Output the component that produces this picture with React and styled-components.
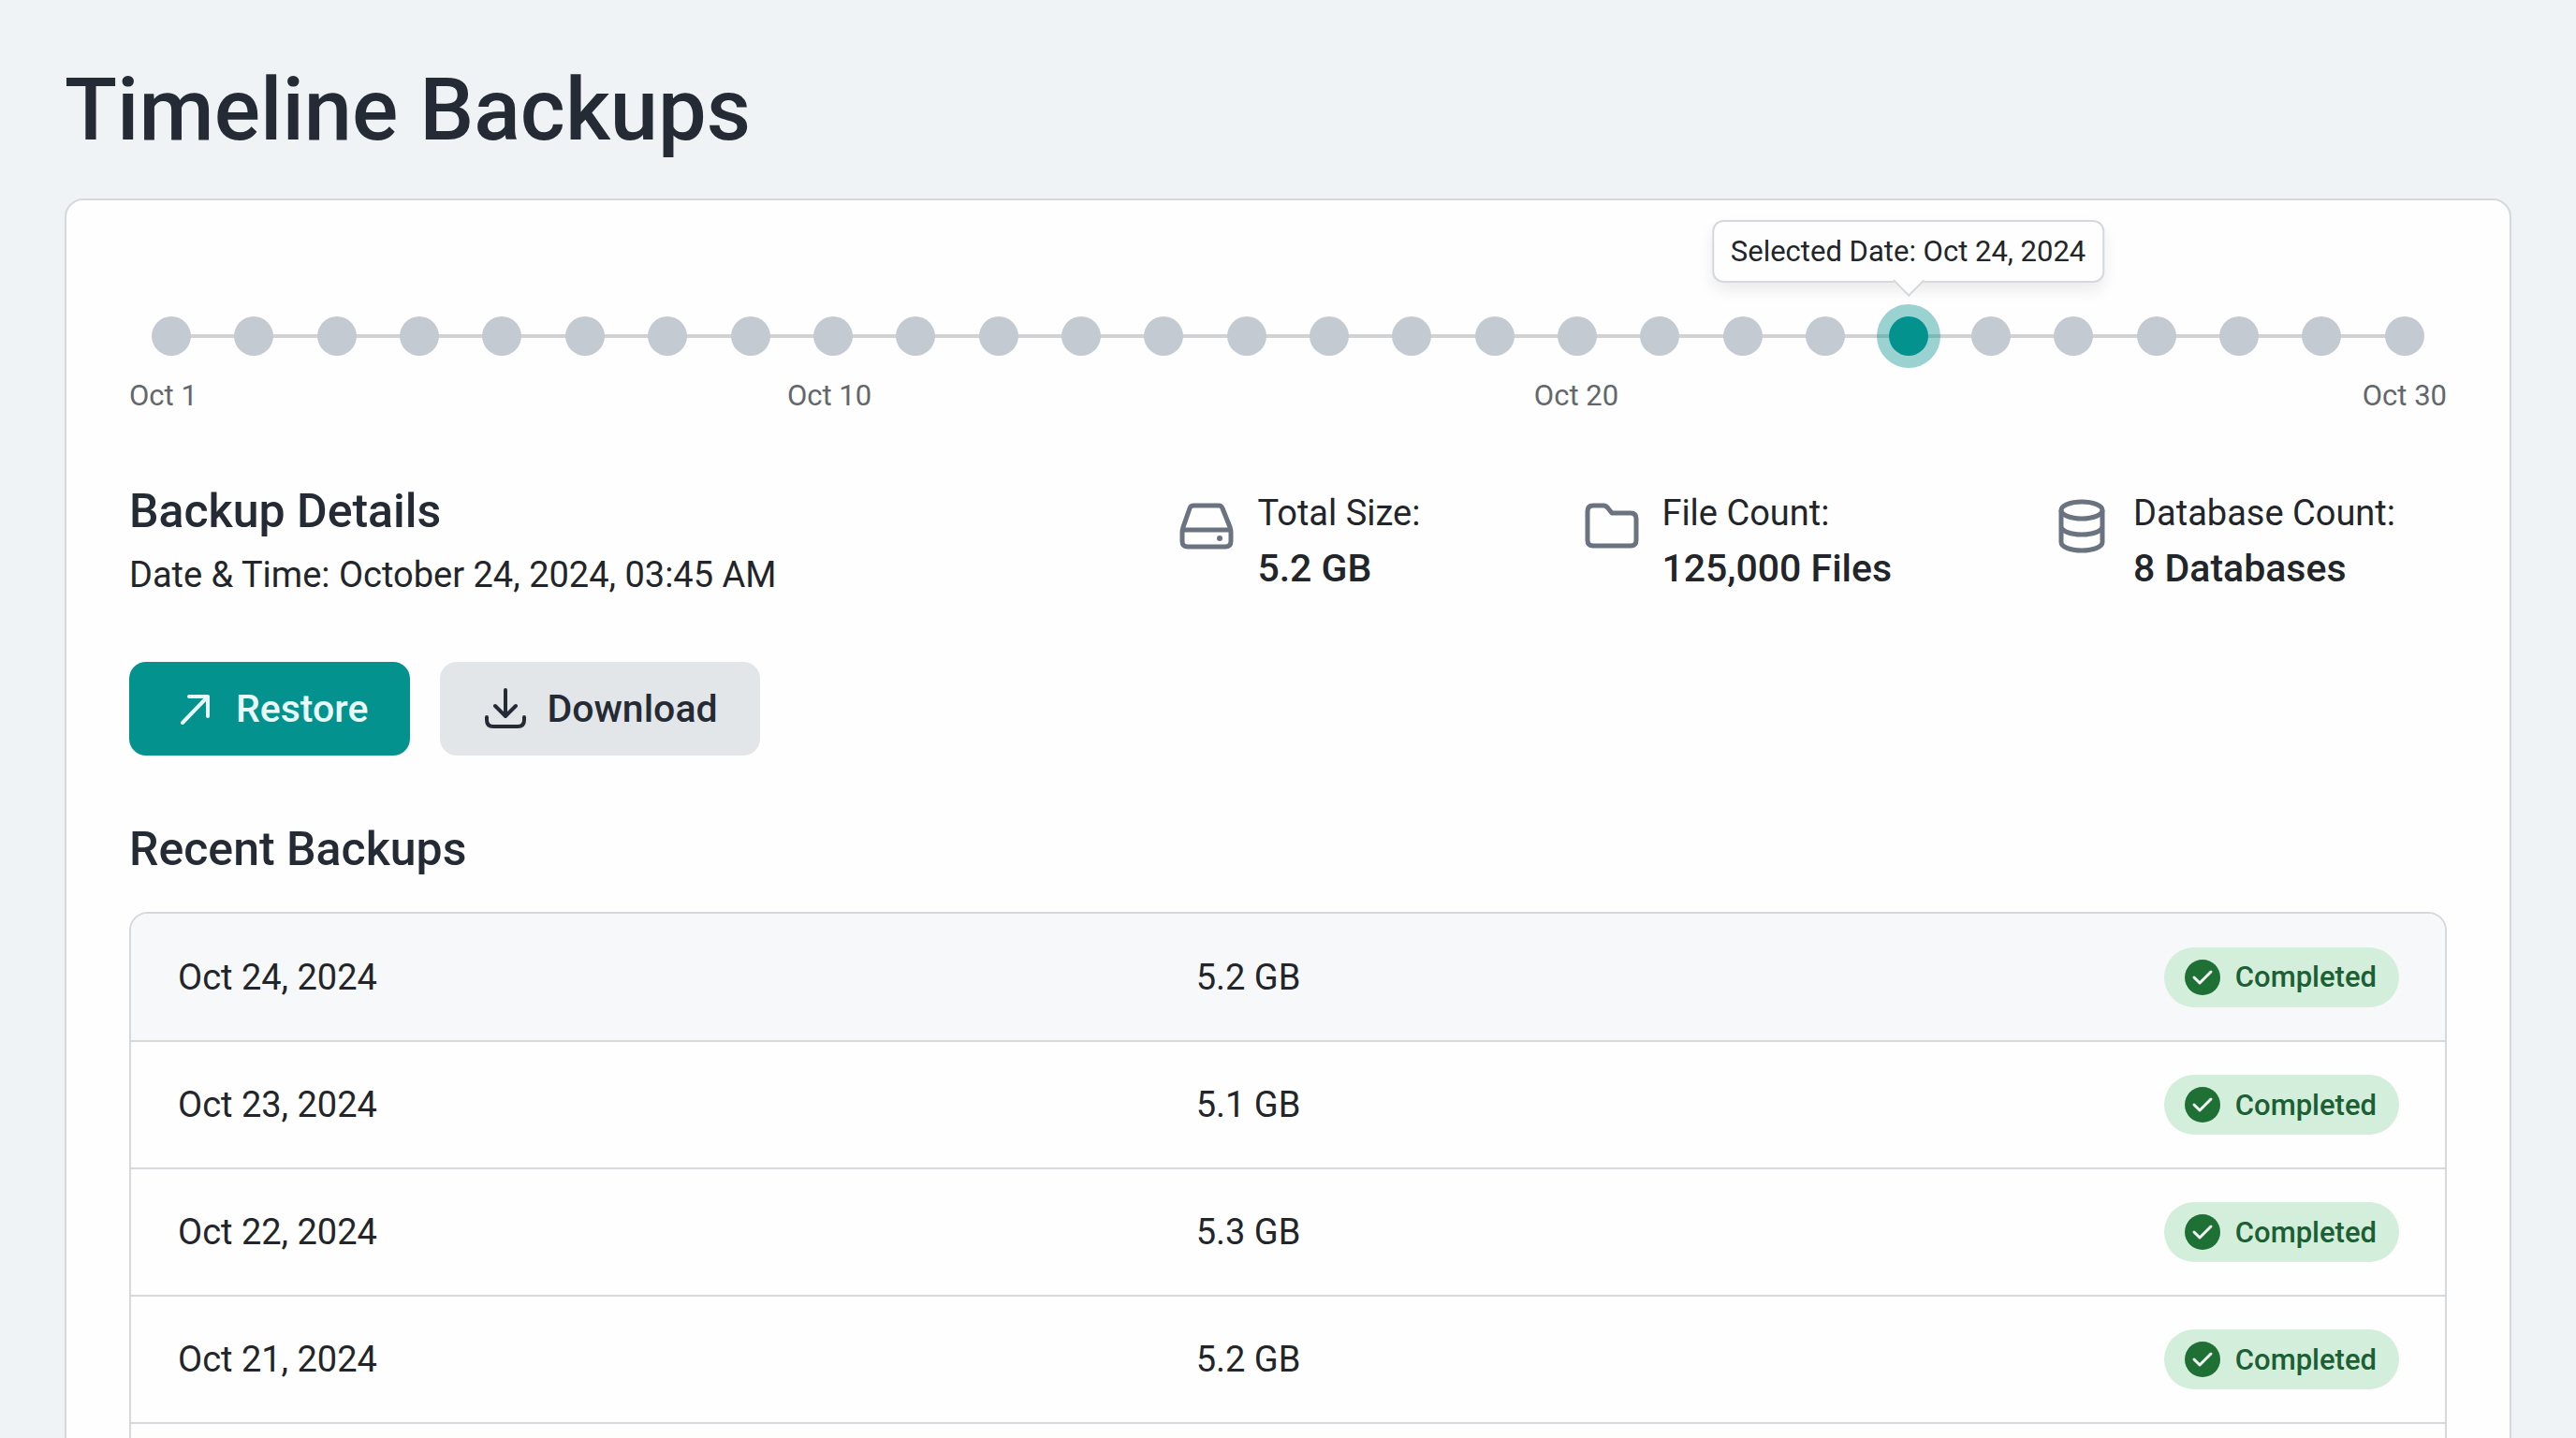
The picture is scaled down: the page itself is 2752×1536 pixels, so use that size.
import React, { useState } from "react";
import styled, { createGlobalStyle, ThemeProvider } from "styled-components";

const theme = {
  color: {
    page: "#eff3f6",
    white: "#fefefe",
    heading: "#252b35",
    text: "#222529",
    muted: "#63676c",
    border: "#d5d9dd",
    dot: "#c4cad2",
    primary: "#03928d",
    ring: "rgba(3, 146, 141, 0.4)",
    secondary: "#e3e6e9",
    icon: "#6b7280",
    success: "#1f7034",
    successText: "#1c5f34",
    successBg: "#d3eedb",
  },
};

const GlobalStyle = createGlobalStyle`
  * {
    box-sizing: border-box;
    margin: 0;
    padding: 0;
  }
  body {
    background-color: ${theme.color.page};
    color: ${theme.color.text};
    font-family: Roboto, "Liberation Sans", sans-serif;
    font-size: 38px;
    height: 100vh;
    overflow: hidden;
  }
`;

const StPage = styled.main`
  padding: 70px 69px;
`;

const StTitle = styled.h1`
  color: ${({ theme }) => theme.color.heading};
  font-size: 92px;
  font-weight: 500;
  line-height: 96px;
  margin-bottom: 46px;
`;

const StCard = styled.section`
  background-color: ${({ theme }) => theme.color.white};
  border: 2px solid ${({ theme }) => theme.color.border};
  border-radius: 20px;
  padding: 111px 67px 67px;
`;

const StTimeline = styled.div`
  display: flex;
  flex-direction: column;
  gap: 10px;
`;

const StTrack = styled.div`
  display: flex;
  justify-content: space-between;
  align-items: center;
  height: 68px;
  padding: 0 24px;
  background: linear-gradient(#d0d2d4, #d0d2d4) center / calc(100% - 90px) 4px no-repeat;
`;

const StDot = styled.button`
  position: relative;
  width: 42px;
  height: 42px;
  border: none;
  border-radius: 50%;
  cursor: pointer;
  background-color: ${({ theme, $selected }) => ($selected ? theme.color.primary : theme.color.dot)};
  box-shadow: ${({ theme, $selected }) => ($selected ? `0 0 0 13px ${theme.color.ring}` : "none")};
`;

const StTooltip = styled.span`
  position: absolute;
  bottom: 78px;
  left: 50%;
  transform: translateX(-50%);
  padding: 0 18px;
  border: 2px solid ${({ theme }) => theme.color.border};
  border-radius: 12px;
  background-color: ${({ theme }) => theme.color.white};
  box-shadow: 0 8px 16px rgba(0, 0, 0, 0.08);
  color: ${({ theme }) => theme.color.text};
  font: 400 31px/63px Roboto, "Liberation Sans", sans-serif;
  white-space: nowrap;
  &::after {
    content: "";
    position: absolute;
    bottom: -12px;
    left: 50%;
    width: 22px;
    height: 22px;
    margin-left: -11px;
    background-color: ${({ theme }) => theme.color.white};
    border: solid ${({ theme }) => theme.color.border};
    border-width: 0 2px 2px 0;
    transform: rotate(45deg);
  }
`;

const StScale = styled.div`
  display: flex;
  color: ${({ theme }) => theme.color.muted};
  font-size: 31px;
  line-height: 40px;
`;

const StScaleLabel = styled.span`
  flex: ${({ $span }) => $span} 0 0;
`;

const StDetails = styled.div`
  display: flex;
  justify-content: space-between;
  margin-top: 71px;
  padding-right: 55px;
`;

const StSectionTitle = styled.h2`
  color: ${({ theme }) => theme.color.heading};
  font-size: 50px;
  font-weight: 500;
  line-height: 64px;
`;

const StDateTime = styled.p`
  line-height: 72px;
`;

const StStats = styled.dl`
  display: flex;
  gap: 174px;
`;

const StStat = styled.div`
  display: flex;
  gap: 24px;
  padding-top: 5px;
  line-height: 59px;
  dd {
    font-size: 41px;
    font-weight: 500;
  }
`;

const StStatIcon = styled.svg`
  width: 60px;
  height: 60px;
  margin-top: 13px;
  fill: none;
  stroke: ${({ theme }) => theme.color.icon};
  stroke-width: 5px;
  stroke-linejoin: round;
`;

const StActions = styled.div`
  display: flex;
  gap: 32px;
  margin-top: 57px;
  margin-bottom: 68px;
`;

const StButton = styled.button`
  display: flex;
  align-items: center;
  gap: 21px;
  height: 100px;
  padding: 0 45px 0 47px;
  border: none;
  border-radius: 18px;
  cursor: pointer;
  font: 500 41px Roboto, "Liberation Sans", sans-serif;
  color: ${({ theme, $primary }) => ($primary ? "#e8fbfa" : theme.color.heading)};
  background-color: ${({ theme, $primary }) => ($primary ? theme.color.primary : theme.color.secondary)};
`;

const StButtonIcon = styled.svg`
  width: 46px;
  height: 46px;
  fill: none;
  stroke: currentColor;
  stroke-width: 4px;
  stroke-linecap: round;
  stroke-linejoin: round;
`;

const StTableBox = styled.div`
  margin-top: 35px;
  padding-bottom: 72px;
  border: 2px solid ${({ theme }) => theme.color.border};
  border-radius: 20px;
  overflow: hidden;
`;

const StTable = styled.table`
  width: 100%;
  border-collapse: collapse;
  table-layout: fixed;
`;

const StRow = styled.tr`
  height: 136px;
  background-color: ${({ $selected }) => ($selected ? "#f7f8fa" : "transparent")};
  border-bottom: 2px solid ${({ theme }) => theme.color.border};
`;

const StCell = styled.td`
  width: ${({ $width }) => $width};
  padding: 0 49px 0 50px;
  text-align: ${({ $align }) => $align || "left"};
`;

const StBadge = styled.span`
  display: inline-flex;
  align-items: center;
  gap: 16px;
  height: 64px;
  padding: 0 24px 0 22px;
  border-radius: 32px;
  background-color: ${({ theme }) => theme.color.successBg};
  color: ${({ theme }) => theme.color.successText};
  font-size: 31px;
  font-weight: 500;
  vertical-align: middle;
`;

const days = Array.from({ length: 28 }, (_, i) => i + 1);

const scale = [
  { label: "Oct 1", span: 703 },
  { label: "Oct 10", span: 798 },
  { label: "Oct 20", span: 885 },
];

const backups = [
  { date: "Oct 24, 2024", size: "5.2 GB" },
  { date: "Oct 23, 2024", size: "5.1 GB" },
  { date: "Oct 22, 2024", size: "5.3 GB" },
  { date: "Oct 21, 2024", size: "5.2 GB" },
];

const stats = [
  {
    label: "Total Size:",
    value: "5.2 GB",
    icon: (
      <>
        <path d="M16 8H43Q46 8 47 11L55 31Q56 34 56 37V46Q56 52 50 52H10Q4 52 4 46V37Q4 34 5 31L12 11Q13 8 16 8ZM5 34H55" />
        <circle cx="44" cy="43" r="3" fill={theme.color.icon} stroke="none" />
      </>
    ),
  },
  {
    label: "File Count:",
    value: "125,000 Files",
    icon: <path d="M11 8H22Q25 8 27 11L31 16H51Q57 16 57 22V45Q57 51 51 51H11Q5 51 5 45V14Q5 8 11 8Z" />,
  },
  {
    label: "Database Count:",
    value: "8 Databases",
    icon: (
      <>
        <ellipse cx="29" cy="13" rx="22" ry="9" />
        <path d="M7 13V47C7 52 16 56 29 56S51 52 51 47V13M7 30C7 35 16 39 29 39S51 35 51 30" />
      </>
    ),
  },
];

function CheckIcon() {
  return (
    <svg width="38" height="38" viewBox="0 0 38 38" fill="none">
      <circle cx="19" cy="19" r="19" fill={theme.color.success} />
      <path d="M10 19L16 25L28 13" stroke="#f2faf4" strokeWidth="3" strokeLinecap="round" strokeLinejoin="round" />
    </svg>
  );
}

export default function App() {
  const [selected, setSelected] = useState(22);

  return (
    <ThemeProvider theme={theme}>
      <GlobalStyle />
      <StPage>
        <StTitle>Timeline Backups</StTitle>
        <StCard>
          {/* timeline */}
          <StTimeline>
            <StTrack>
              {days.map((day) => (
                <StDot key={day} aria-label={`Backup ${day}`} $selected={day === selected} onClick={() => setSelected(day)}>
                  {day === selected && <StTooltip>Selected Date: Oct 24, 2024</StTooltip>}
                </StDot>
              ))}
            </StTrack>
            <StScale>
              {scale.map(({ label, span }) => (
                <StScaleLabel key={label} $span={span}>
                  {label}
                </StScaleLabel>
              ))}
              <span>Oct 30</span>
            </StScale>
          </StTimeline>

          {/* details */}
          <StDetails>
            <div>
              <StSectionTitle>Backup Details</StSectionTitle>
              <StDateTime>Date &amp; Time: October 24, 2024, 03:45 AM</StDateTime>
            </div>
            <StStats>
              {stats.map(({ label, value, icon }) => (
                <StStat key={label}>
                  <StStatIcon viewBox="0 0 60 60">{icon}</StStatIcon>
                  <div>
                    <dt>{label}</dt>
                    <dd>{value}</dd>
                  </div>
                </StStat>
              ))}
            </StStats>
          </StDetails>

          <StActions>
            <StButton $primary>
              <StButtonIcon viewBox="0 0 46 46">
                <path d="M10 38L37 10M17 10H37V31" />
              </StButtonIcon>
              Restore
            </StButton>
            <StButton>
              <StButtonIcon viewBox="0 0 46 46">
                <path d="M23 3V31M12 20L23 31L34 20M3 32V35Q3 42 10 42H36Q43 42 43 35V32" />
              </StButtonIcon>
              Download
            </StButton>
          </StActions>

          {/* recent backups */}
          <StSectionTitle>Recent Backups</StSectionTitle>
          <StTableBox>
            <StTable>
              <tbody>
                {backups.map(({ date, size }, i) => (
                  <StRow key={date} $selected={i === 0}>
                    <StCell $width="44%">{date}</StCell>
                    <StCell $width="28%">{size}</StCell>
                    <StCell $width="28%" $align="right">
                      <StBadge>
                        <CheckIcon />
                        Completed
                      </StBadge>
                    </StCell>
                  </StRow>
                ))}
              </tbody>
            </StTable>
          </StTableBox>
        </StCard>
      </StPage>
    </ThemeProvider>
  );
}
